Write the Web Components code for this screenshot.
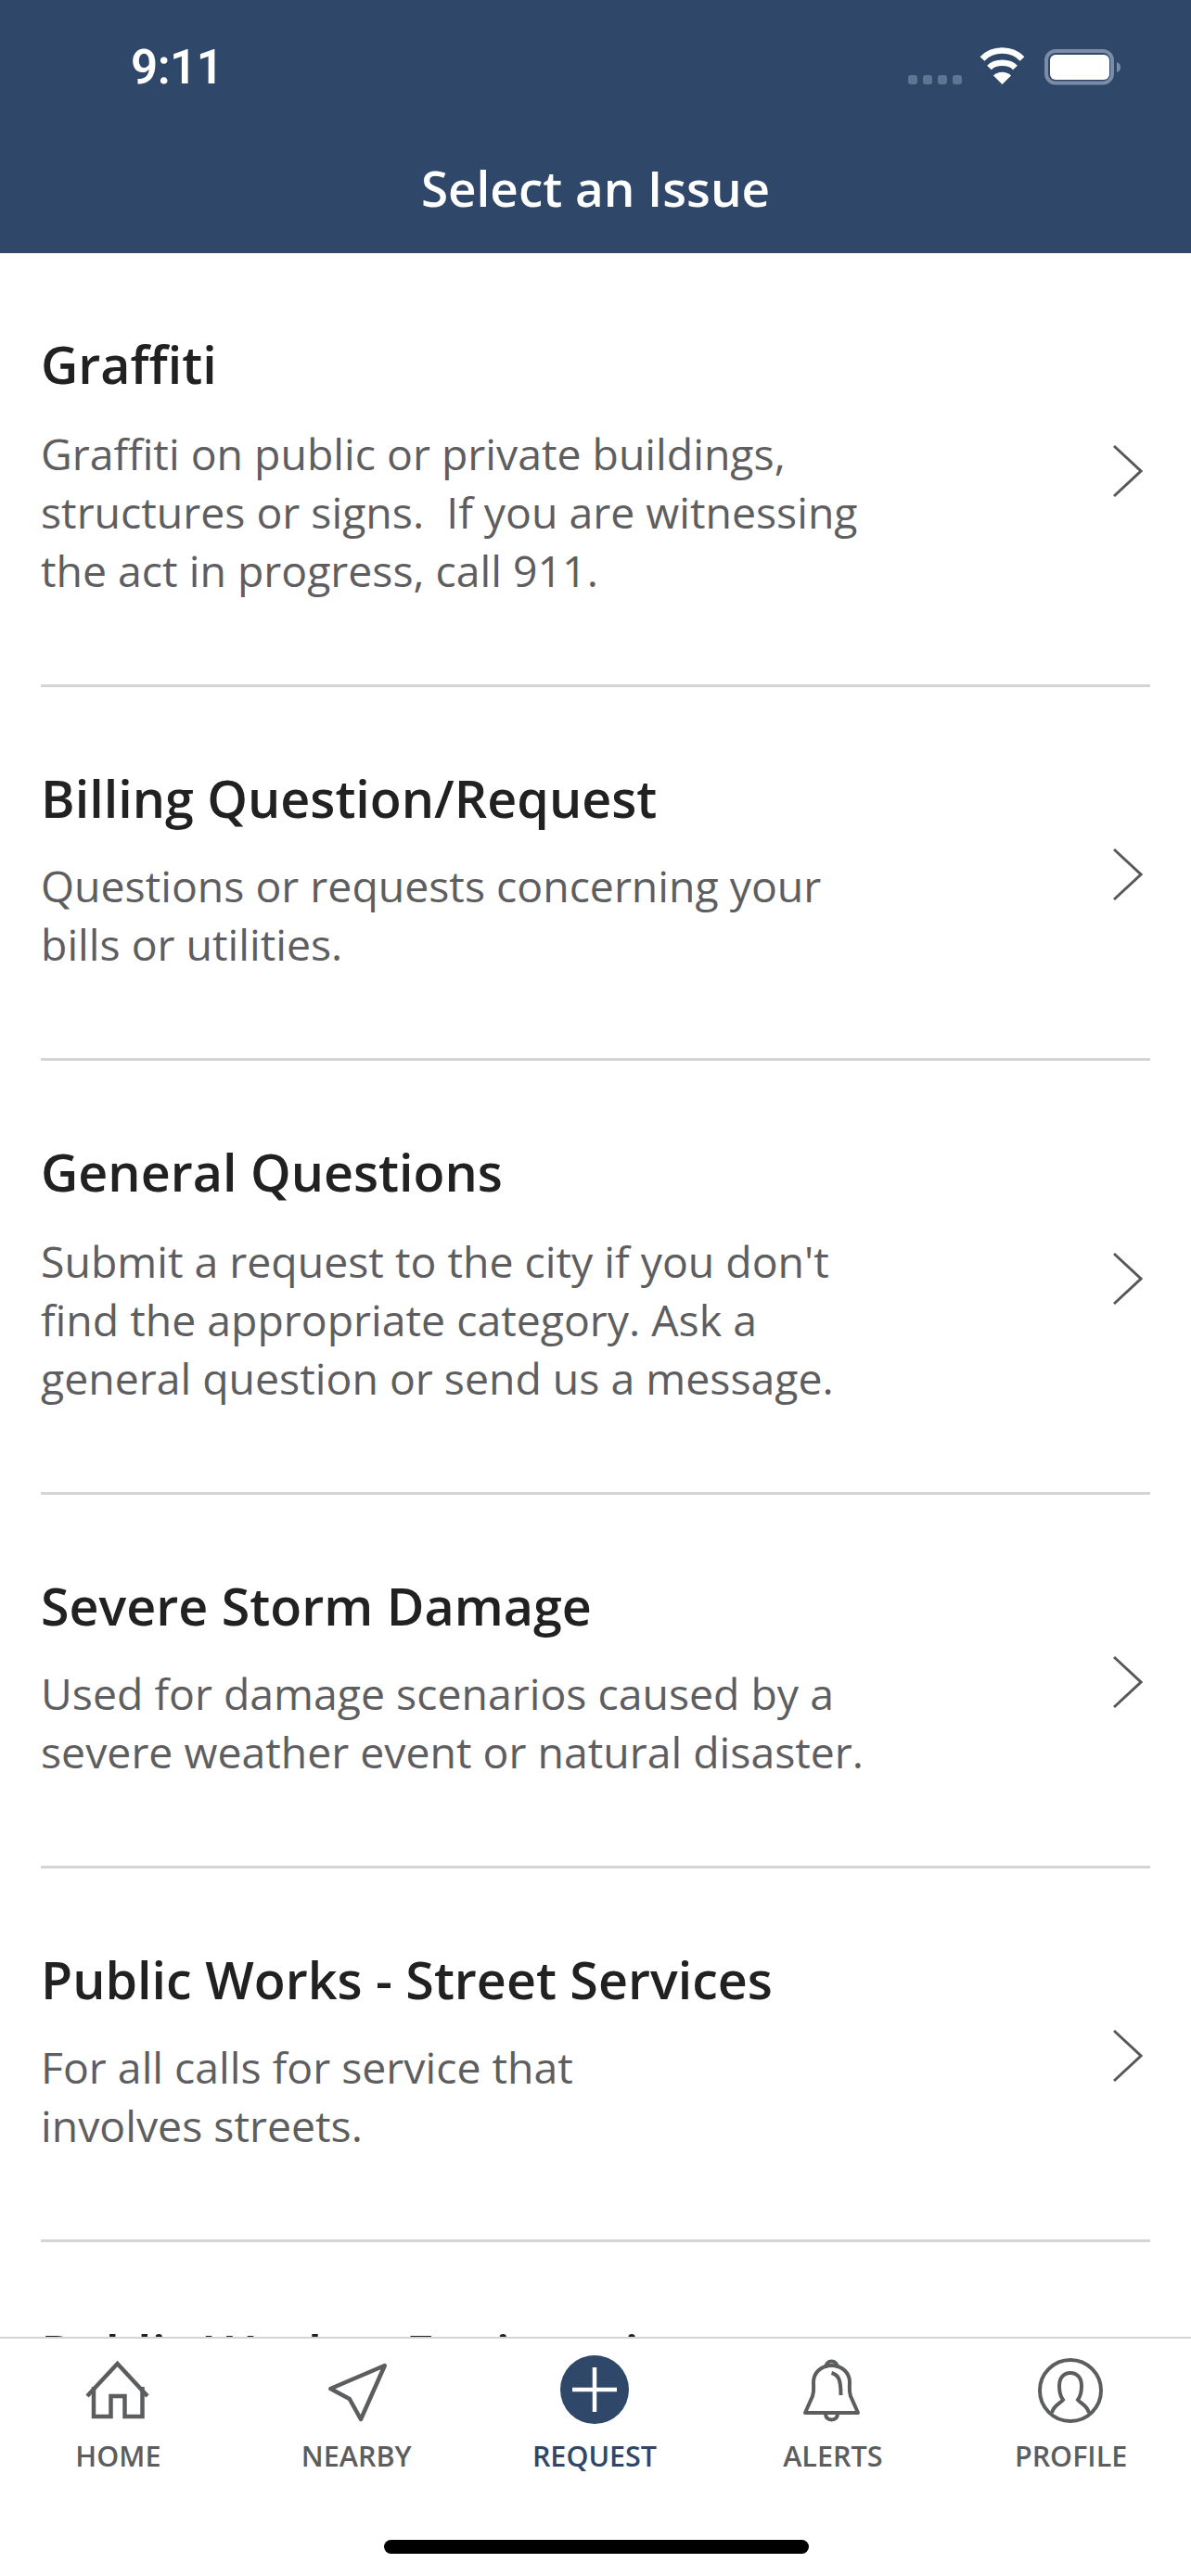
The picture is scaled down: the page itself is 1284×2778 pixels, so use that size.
<!DOCTYPE html>
<html lang="en"><head><meta charset="utf-8"><title>Select an Issue</title>
<style>html,body{margin:0;padding:0;background:#fff}body{font-family:"Open Sans",sans-serif}</style></head>
<body>
<app-shell>
  <app-header slot="header" title="Select an Issue"></app-header>
  <issue-row tall><span slot="title">Graffiti</span>Graffiti on public or private buildings,<br>structures or signs.&nbsp; If you are witnessing<br>the act in progress, call 911.</issue-row>
  <issue-row><span slot="title">Billing Question/Request</span>Questions or requests concerning your<br>bills or utilities.</issue-row>
  <issue-row tall><span slot="title">General Questions</span>Submit a request to the city if you don't<br>find the appropriate category. Ask a<br>general question or send us a message.</issue-row>
  <issue-row><span slot="title">Severe Storm Damage</span>Used for damage scenarios caused by a<br>severe weather event or natural disaster.</issue-row>
  <issue-row><span slot="title">Public Works - Street Services</span>For all calls for service that<br>involves streets.</issue-row>
  <issue-row><span slot="title">Public Works - Engineering</span></issue-row>
  <tab-bar slot="tabs">
    <tab-item icon="home">HOME</tab-item>
    <tab-item icon="nearby">NEARBY</tab-item>
    <tab-item icon="request" active>REQUEST</tab-item>
    <tab-item icon="alerts">ALERTS</tab-item>
    <tab-item icon="profile">PROFILE</tab-item>
  </tab-bar>
</app-shell>
<script>
const shadow=(el,html)=>{el.attachShadow({mode:'open'}).innerHTML=html};
customElements.define('app-shell',class extends HTMLElement{constructor(){super();shadow(this,`<style>
:host{display:flex;flex-direction:column;width:1284px;height:2778px;overflow:hidden;background:#fff}
.list{flex:1;min-height:0;overflow:hidden}
</style><slot name="header"></slot><div class="list"><slot></slot></div><slot name="tabs"></slot>`)}});
customElements.define('status-bar',class extends HTMLElement{constructor(){super();shadow(this,`<style>
:host{display:flex;align-items:flex-start;justify-content:space-between;height:102px;box-sizing:border-box;padding:0 76px 0 141px}
.t{font:600 51px/1 Roboto,"Liberation Sans",sans-serif;color:#fff;margin-top:47px;letter-spacing:-.5px}
svg{display:block;margin-top:50px}
</style><span class="t">9:11</span>
<svg width="232" height="44" viewBox="0 0 232 44">
<g fill="#5f7693"><rect x="3" y="31" width="10" height="10" rx="3"/><rect x="19" y="31" width="10" height="10" rx="3"/><rect x="35" y="31" width="10" height="10" rx="3"/><rect x="51" y="31" width="10" height="10" rx="3"/></g>
<g fill="none" stroke="#fff" stroke-width="6.500"><path d="M83 13.500C94 1.500 115 1.500 126 13.500"/><path d="M90.500 23C97 16 112 16 118.500 23"/></g>
<path d="M104.500 41L95 31.500C100 26.500 109 26.500 114 31.500Z" fill="#fff"/>
<rect x="152" y="5" width="71" height="34.500" rx="10" fill="none" stroke="#7a8ca8" stroke-width="4"/>
<rect x="156" y="9" width="64" height="27" rx="6" fill="#fff"/>
<path d="M228 17C231 18 232 20 232 22.500C232 25 231 27 228 28Z" fill="#7a8ca8"/>
</svg>`)}});
customElements.define('app-header',class extends HTMLElement{constructor(){super();shadow(this,`<style>
:host{display:block;height:273px;background:#2f4769;flex:none}
h1{margin:0;height:171px;box-sizing:border-box;padding-top:64px;text-align:center;font:600 53px/74px "Open Sans",sans-serif;color:#fff}
</style><status-bar></status-bar><h1></h1>`);this.shadowRoot.querySelector('h1').textContent=this.getAttribute('title')||''}});
customElements.define('issue-row',class extends HTMLElement{constructor(){super();shadow(this,`<style>
:host{display:block;margin:0 44px;border-bottom:3px solid #d5d5d5}
.row{display:flex;align-items:center;justify-content:space-between;padding:83px 8px 91px 0}
.title{font:600 55.6px/74px "Open Sans",sans-serif;color:#212121;margin-bottom:26px}
:host([tall]) .title{margin-bottom:28px}
.desc{font:400 46.4px/63px "Open Sans",sans-serif;color:#5e5e60}
svg{flex:none;display:block;margin-top:12px}
</style><div class="row"><div><div class="title"><slot name="title"></slot></div><div class="desc"><slot></slot></div></div>
<svg width="32" height="58" viewBox="0 0 32 58"><path d="M1 2L30 29L1 56" fill="none" stroke="#58585a" stroke-width="3"/></svg></div>`)}});
const ICONS={
home:`<g fill="none" stroke="#5c5d5f" stroke-width="4.500"><path d="M6 44L38.600 9L71 44"/><path d="M13 34V66H31.500V44H46.500V66H65.500V34"/></g>`,
nearby:`<path d="M69.800 11L11.300 36L31.800 47L44 69Z" fill="none" stroke="#5c5d5f" stroke-width="4.500" stroke-linejoin="round"/>`,
request:`<circle cx="39" cy="37" r="37" fill="#2f4769"/><path d="M15 37H63M39 13V61" stroke="#fff" stroke-width="4.500"/>`,
alerts:`<g fill="none" stroke="#5c5d5f" stroke-width="4"><path d="M31 14C31 4 44 4 44 14"/><path d="M9 62L17 44C19 38 18 34 18 29C18 19 26 11 37.500 11C49 11 57 19 57 29C57 34 56 38 58 44L66 62Z" stroke-linejoin="round"/><path d="M31.500 62C29 72 46 72 43.500 62"/><path d="M37.500 19C45 21 47.500 26 47.500 43"/></g>`,
profile:`<g fill="none" stroke="#5c5d5f" stroke-width="4"><circle cx="38" cy="38" r="33"/><path d="M18 62C20 54 27 52 30 48C27 44 26 40 26 33C26 24 31 19 38 19C45 19 50 24 50 33C50 40 49 44 46 48C49 52 56 54 58 62"/></g>`};
customElements.define('tab-item',class extends HTMLElement{constructor(){super();const a=this.hasAttribute('active');shadow(this,`<style>
:host{display:flex;flex-direction:column;align-items:center;flex:1 1 0;min-width:0;font:600 30.5px/41px "Open Sans",sans-serif;color:${a?'#2f4769':'#5c5d5f'}}
svg{display:block;margin-bottom:8px}
span{margin-left:-2px}
</style><svg width="80" height="80" viewBox="0 0 80 80">${ICONS[this.getAttribute('icon')]}</svg><span><slot></slot></span>`)}});
customElements.define('tab-bar',class extends HTMLElement{constructor(){super();shadow(this,`<style>
:host{display:block;position:relative;height:258px;box-sizing:border-box;flex:none;background:#fff;border-top:2px solid #d5d5d5}
.tabs{display:flex;padding-top:18px}
.home{position:absolute;left:414px;top:217px;width:458px;height:15px;border-radius:8px;background:#000}
</style><div class="tabs"><slot></slot></div><div class="home"></div>`)}});
</script>
</body></html>
